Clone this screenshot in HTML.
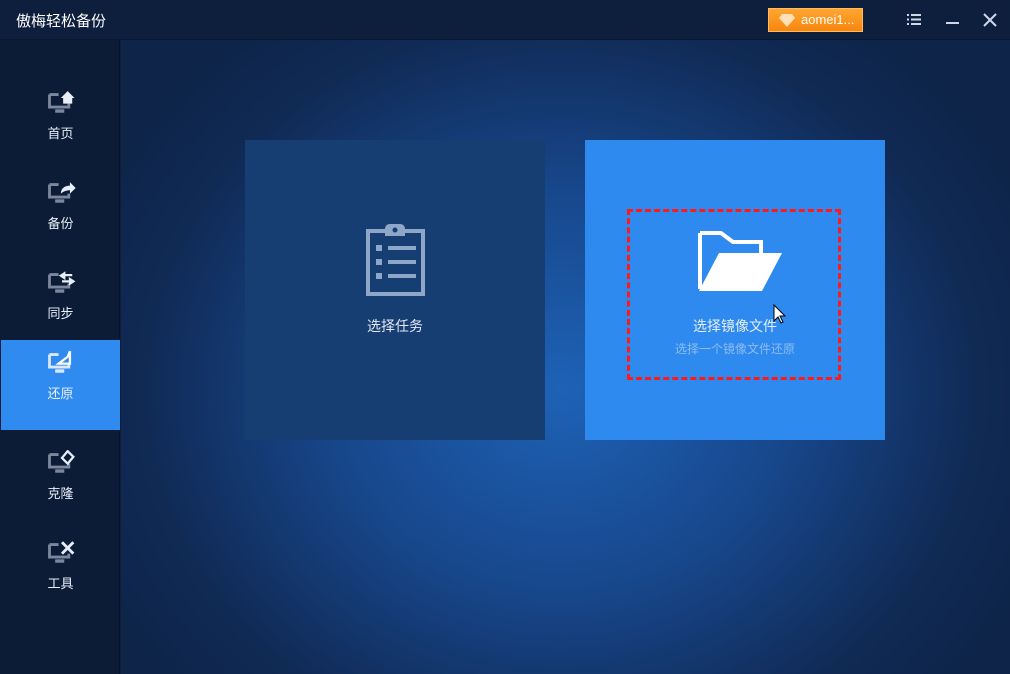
<!DOCTYPE html>
<html><head><meta charset="utf-8"><style>
*{margin:0;padding:0;box-sizing:border-box}
body{width:1010px;height:674px;overflow:hidden;font-family:"Liberation Sans","Noto Sans CJK SC",sans-serif;background:#0d1f3c;position:relative}
.title{position:absolute;left:0;top:0;width:1010px;height:40px;background:#0d1f3d;border-bottom:1px solid #0a1730}
.title .t{position:absolute;left:16px;top:10px;color:#fff;font-size:15px}
.btn{position:absolute;left:768px;top:8px;width:95px;height:24px;background:linear-gradient(#ffa631,#f7860e);border:1px solid #ffbb66;color:#fff;font-size:13px;line-height:22px;padding-left:32px}
.main{position:absolute;left:121px;top:40px;width:889px;height:634px;background:radial-gradient(ellipse 520px 460px at 440px 350px,#1e62b6 0%,#17468a 45%,#102a55 80%,#0e2448 100%)}
.side{position:absolute;left:0;top:40px;width:120px;height:634px;background:#0c1c37;border-right:1px solid #08132a}
.item{position:absolute;left:1px;width:119px;height:90px;text-align:center;color:#e8eef8;font-size:13px}
.item svg{position:absolute;left:46px;top:10px}
.item span{position:absolute;left:0;width:119px;top:43px}
.act{background:#2f8bf0}
.card{position:absolute;top:140px;width:300px;height:300px;text-align:center}
.c1{left:245px;background:#173e73}
.c2{left:585px;background:#2f8af0}
.dash{position:absolute;left:627px;top:209px;width:214px;height:171px;border:3px dashed #ff1a1a}
</style></head><body>
<div class="title"><div class="t">傲梅轻松备份</div>
<div class="btn"><svg style="position:absolute;left:10px;top:5px" width="16" height="13" viewBox="0 0 16 13"><path d="M3 0h10l3 4-8 9-8-9z" fill="#ffe0b8"/></svg>aomei1...</div>
<svg style="position:absolute;left:907px;top:13px" width="14" height="13" viewBox="0 0 14 13" fill="#cfd8e8"><rect x="0" y="1" width="2" height="2"/><rect x="4" y="1" width="10" height="2"/><rect x="0" y="5.5" width="2" height="2"/><rect x="4" y="5.5" width="10" height="2"/><rect x="0" y="10" width="2" height="2"/><rect x="4" y="10" width="10" height="2"/></svg>
<div style="position:absolute;left:946px;top:22px;width:13px;height:2px;background:#cfd8e8"></div>
<svg style="position:absolute;left:983px;top:13px" width="14" height="14" viewBox="0 0 14 14" stroke="#cfd8e8" stroke-width="2"><path d="M1 1L13 13M13 1L1 13"/></svg>
</div>
<div class="side">
<div class="item" style="top:40px"><svg width="30" height="25" viewBox="0 0 26 22"><path d="M2 4h8M2 4v11h17v-3" stroke="#7c879d" stroke-width="2.5" fill="none"/><rect x="7" y="17" width="8" height="3" fill="#7c879d"/><path d="M12 7l6-6 6 6h-2v5h-8v-5z" fill="#e8eef8"/></svg><span>首页</span></div>
<div class="item" style="top:130px"><svg width="30" height="25" viewBox="0 0 26 22"><path d="M2 4h8M2 4v11h17v-3" stroke="#7c879d" stroke-width="2.5" fill="none"/><rect x="7" y="17" width="8" height="3" fill="#7c879d"/><path d="M12 12c0-5 4-7 8-7V2l5 5-5 5V9c-3 0-6 1-8 3z" fill="#e8eef8"/></svg><span>备份</span></div>
<div class="item" style="top:220px"><svg width="30" height="25" viewBox="0 0 26 22"><path d="M2 4h8M2 4v11h17v-3" stroke="#7c879d" stroke-width="2.5" fill="none"/><rect x="7" y="17" width="8" height="3" fill="#7c879d"/><path d="M15 3l-3 2 3 2zM14 4.5h8M20 8l3 2-3 2zM13 10h8" stroke="#e8eef8" stroke-width="2" fill="#e8eef8"/></svg><span>同步</span></div>
<div class="item act" style="top:300px"><svg width="30" height="25" viewBox="0 0 26 22"><path d="M2 4h8M2 4v11h17v-3" stroke="#d9e8ff" stroke-width="2.5" fill="none"/><rect x="7" y="17" width="8" height="3" fill="#d9e8ff"/><path d="M10 12l8-6 2-5v11z" stroke="#fff" stroke-width="2" fill="none"/></svg><span>还原</span></div>
<div class="item" style="top:400px"><svg width="30" height="25" viewBox="0 0 26 22"><path d="M2 4h8M2 4v11h17v-3" stroke="#7c879d" stroke-width="2.5" fill="none"/><rect x="7" y="17" width="8" height="3" fill="#7c879d"/><path d="M18 1l5 5-5 6-5-5z" stroke="#e8eef8" stroke-width="2" fill="none"/></svg><span>克隆</span></div>
<div class="item" style="top:490px"><svg width="30" height="25" viewBox="0 0 26 22"><path d="M2 4h8M2 4v11h17v-3" stroke="#7c879d" stroke-width="2.5" fill="none"/><rect x="7" y="17" width="8" height="3" fill="#7c879d"/><path d="M13 2l10 10M23 2L13 12" stroke="#e8eef8" stroke-width="2.5"/></svg><span>工具</span></div>
</div>
<div class="main"></div>
<div class="card c1">
<svg style="position:absolute;left:117px;top:82px" width="66" height="75" viewBox="0 0 66 75"><path d="M6 9h55v63H6z" stroke="#8ea6c8" stroke-width="4" fill="none"/><path d="M23 14V7c0-3 2-5 5-5h10c3 0 5 2 5 5v7z" fill="#8ea6c8"/><circle cx="33" cy="8" r="2.5" fill="#173e73"/><path d="M14 23h6v6h-6zM14 37h6v6h-6zM14 51h6v6h-6z" fill="#8ea6c8"/><path d="M26 26h28M26 40h28M26 54h28" stroke="#8ea6c8" stroke-width="4"/></svg>
<div style="position:absolute;top:176px;width:300px;color:#e3eaf5;font-size:14px">选择任务</div></div>
<div class="card c2"><svg style="position:absolute;left:112px;top:91px" width="86" height="62" viewBox="0 0 86 62"><path d="M3 2h21l12 9h28v13" stroke="#fff" stroke-width="4" fill="none"/><path d="M3 2v56" stroke="#fff" stroke-width="4"/><path d="M22 22h63L65 60H2z" fill="#fff"/></svg>
<div style="position:absolute;top:176px;width:300px;color:#e3eef9;font-size:14px">选择镜像文件</div>
<div style="position:absolute;top:200px;width:300px;color:#8cbcf2;font-size:12px">选择一个镜像文件还原</div></div>
<div class="dash"></div>
<svg style="position:absolute;left:773px;top:304px" width="13" height="21" viewBox="0 0 13 21"><path d="M1 1v16l4-4 3 6 2-1-3-6h5z" fill="#fff" stroke="#000" stroke-width="1"/></svg>
</body></html>
